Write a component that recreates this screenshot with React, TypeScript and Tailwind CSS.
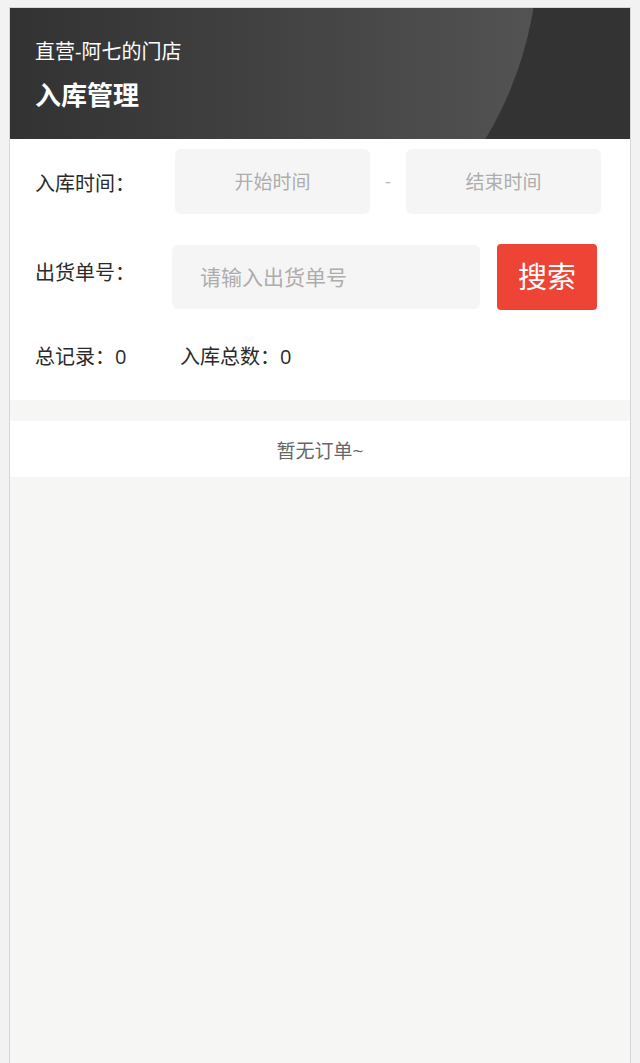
import { useState } from 'react';

export default function App() {
  const [startTime, setStartTime] = useState('');
  const [endTime, setEndTime] = useState('');
  const [orderNo, setOrderNo] = useState('');

  const total = 0;
  const stockTotal = 0;

  return (
    <div className="h-[1063px] bg-[#f2f2f2] px-[9px] pt-[7px] font-['Open_Sans','Noto_Sans_CJK_SC',sans-serif] overflow-hidden">
      <div className="h-full border border-b-0 border-[#d6d6d6] bg-[#f6f7f5] flex flex-col">
        {/* Header */}
        <div className="relative h-[131px] shrink-0 overflow-hidden bg-[#333333]">
          <div className="absolute left-[-204px] top-[-424px] w-[732px] h-[732px] rounded-full bg-linear-to-r from-[#262626] to-[#535353]" />
          <div className="relative pl-[25px] pt-[32px] text-white">
            <div className="text-[20px] leading-[24px]">直营-阿七的门店</div>
            <div className="mt-[15px] text-[26px] leading-[32px] font-bold">入库管理</div>
          </div>
        </div>

        {/* Filters */}
        <div className="bg-white h-[261px] shrink-0 pl-[25px] pr-[29px] pt-[10px] text-[#2a2a2a] text-[20px]">
          <div className="flex items-center">
            <label className="w-[140px] shrink-0 leading-[24px] pt-[4px]">入库时间：</label>
            <input
              value={startTime}
              onChange={(e) => setStartTime(e.target.value)}
              placeholder="开始时间"
              className="w-[195px] h-[65px] rounded-[6px] bg-[#f5f5f5] text-center text-[19px] outline-none placeholder:text-[#adadad]"
            />
            <span className="w-[36px] text-center text-[#b5b5b5] text-[18px]">-</span>
            <input
              value={endTime}
              onChange={(e) => setEndTime(e.target.value)}
              placeholder="结束时间"
              className="w-[195px] h-[65px] rounded-[6px] bg-[#f5f5f5] text-center text-[19px] outline-none placeholder:text-[#adadad]"
            />
          </div>

          <div className="flex items-center mt-[30px]">
            <label className="w-[137px] shrink-0 leading-[24px] pb-[8px]">出货单号：</label>
            <input
              value={orderNo}
              onChange={(e) => setOrderNo(e.target.value)}
              placeholder="请输入出货单号"
              className="w-[308px] h-[64px] rounded-[6px] bg-[#f5f5f5] pl-[28px] text-[21px] outline-none placeholder:text-[#adadad]"
            />
            <button className="ml-[17px] w-[100px] h-[66px] rounded-[4px] bg-[#ee4436] text-white text-[29px]">
              搜索
            </button>
          </div>

          <div className="flex mt-[35px] leading-[24px]">
            <span className="w-[145px]">总记录：{total}</span>
            <span>入库总数：{stockTotal}</span>
          </div>
        </div>

        <div className="h-[21px] shrink-0" />

        {/* Empty list */}
        <div className="bg-white h-[56px] shrink-0 flex items-center justify-center pt-[5px] text-[19px] text-[#666]">
          暂无订单~
        </div>
      </div>
    </div>
  );
}
